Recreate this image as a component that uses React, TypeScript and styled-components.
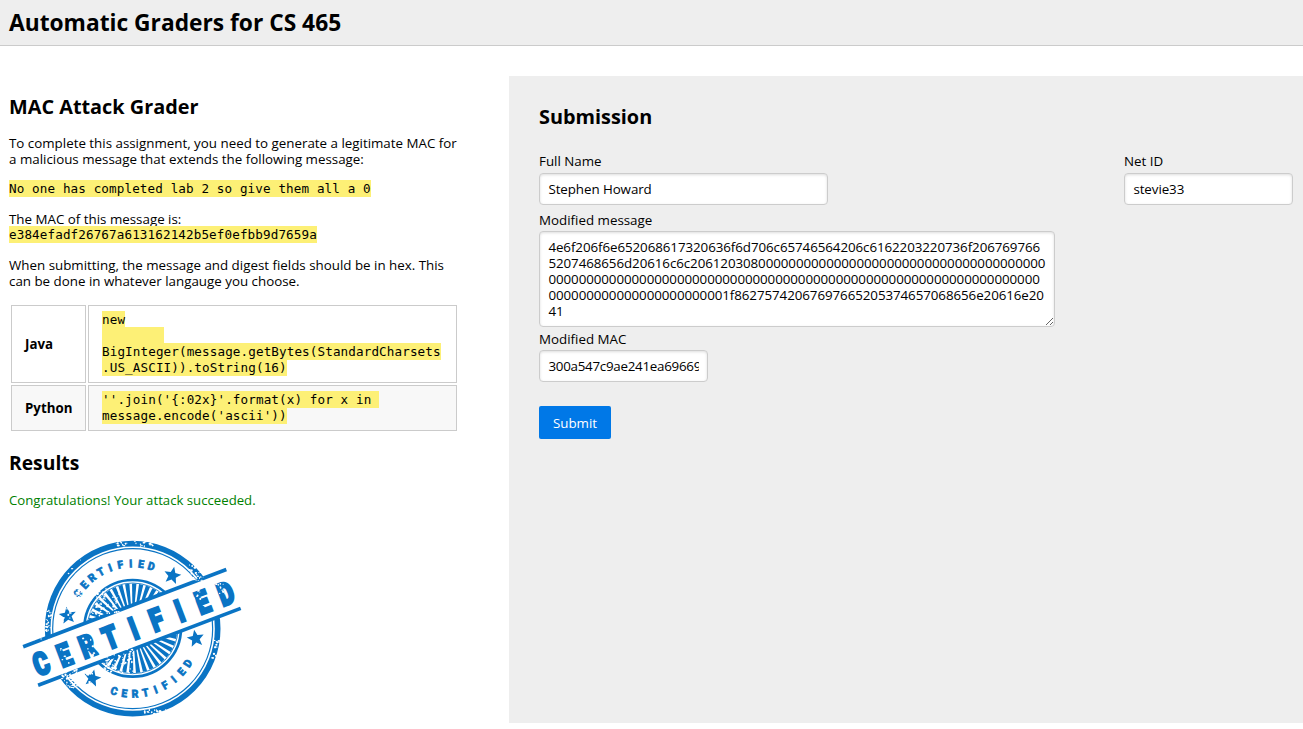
import React from "react";
import styled, { createGlobalStyle } from "styled-components";

const GlobalStyle = createGlobalStyle`
  *, *::before, *::after { box-sizing: border-box; }
  body {
    margin: 0;
    background: #fff;
    color: #000;
    font-family: "Open Sans", "Noto Sans", sans-serif;
    font-size: 13.35px;
    line-height: 16px;
  }
`;

const Header = styled.header`
  height: 46px;
  padding: 0 9px;
  background: #eee;
  border-bottom: 1px solid #cbcbcb;
`;

const PageTitle = styled.h1`
  margin: 0;
  font-size: 22.75px;
  line-height: 45px;
`;

const Columns = styled.main`
  display: grid;
  grid-template-columns: 509px 1fr;
  padding-top: 30px;
`;

const Info = styled.section`
  width: 457px;
  padding: 17px 0 0 9px;
`;

const Heading = styled.h2<{ $gap?: number }>`
  margin: 0 0 ${(p) => p.$gap ?? 14}px;
  font-size: 19.85px;
  line-height: 28px;
`;

const ResultsHeading = styled(Heading)`
  font-size: 19.3px;
`;

const Paragraph = styled.p<{ $gap?: number }>`
  margin: 0 0 ${(p) => p.$gap ?? 13}px;
  white-space: nowrap;
`;

const Success = styled(Paragraph)`
  color: green;
  font-size: 13.2px;
`;

const CodeLine = styled.code`
  display: block;
  position: relative;
  width: fit-content;
  height: 17px;
  margin-bottom: -1px;
  background: #fdf076;
  font-family: "DejaVu Sans Mono", monospace;
  font-size: 12.6px;
  letter-spacing: 0.115px;
  line-height: 17px;
  white-space: pre;
`;

const Digest = styled.div`
  margin: 15px 0 15px;

  ${CodeLine} {
    margin-top: -1px;
  }
`;

const Languages = styled.table`
  width: 450px;
  margin: 0 0 16px;
  border-spacing: 2px;
  table-layout: fixed;
`;

const LanguageRow = styled.tr<{ $height: number; $striped?: boolean }>`
  height: ${(p) => p.$height}px;
  background: ${(p) => (p.$striped ? "#f8f8f8" : "#fff")};
`;

const Cell = styled.td`
  padding: 0 13px 1px;
  border: 1px solid #cbcbcb;
  vertical-align: middle;
`;

const NameCell = styled(Cell)`
  width: 75px;
  font-weight: bold;
  font-size: 13.3px;
`;

const CodeCell = styled(Cell)`
  padding-bottom: 3px;
`;

const Stamp = styled.svg`
  display: block;
  width: 240px;
  height: 195px;
  margin: 22px 0 0 1px;
`;

const Panel = styled.section`
  height: 647px;
  padding: 27px 10px 0 30px;
  background: #eee;
`;

const Form = styled.form`
  display: flex;
  flex-direction: column;
  align-items: flex-start;
`;

const FieldRow = styled.div`
  display: flex;
  justify-content: space-between;
  width: 100%;
`;

const Field = styled.label<{ $gap?: number; $after?: number }>`
  display: flex;
  flex-direction: column;
  gap: ${(p) => p.$gap ?? 4}px;
  margin-bottom: ${(p) => p.$after ?? 7}px;
`;

const Input = styled.input<{ $width: number }>`
  width: ${(p) => p.$width}px;
  height: 32px;
  padding: 0 8.4px;
  border: 1px solid #ccc;
  border-radius: 4px;
  background: #fff;
  box-shadow: inset 0 1px 3px #ddd;
  color: #000;
  font: inherit;
  letter-spacing: -0.07px;
  outline: none;
`;

const MacInput = styled(Input)`
  letter-spacing: -0.26px;
`;

const MessageBox = styled.textarea`
  display: block;
  width: 516px;
  height: 96px;
  padding: 7px 0 7px 8.4px;
  border: 1px solid #ccc;
  border-radius: 4px;
  background: #fff;
  box-shadow: inset 0 1px 3px #ddd;
  color: #000;
  font: inherit;
  letter-spacing: -0.07px;
  white-space: pre;
  overflow: hidden;
  outline: none;
`;

const SubmitButton = styled.button`
  width: 72px;
  height: 33px;
  margin-top: 17px;
  padding: 0;
  border: 0;
  border-radius: 2px;
  background: #0078e7;
  color: #fff;
  font: inherit;
`;

const message = [
  "4e6f206f6e652068617320636f6d706c65746564206c6162203220736f206769766",
  "5207468656d20616c6c206120308" + "0".repeat(38),
  "0".repeat(65),
  "0".repeat(23) + "1f86275742067697665205374657068656e20616e20",
  "41",
].join("\n");

const BLUE = "#0a74c4";
const word = "CERTIFIED".split("");

const starPoints = Array.from({ length: 10 }, (_, i) => {
  const r = i % 2 ? 12 : 27;
  const a = (Math.PI / 5) * i - Math.PI / 2;
  return `${(r * Math.cos(a)).toFixed(1)},${(r * Math.sin(a)).toFixed(1)}`;
}).join(" ");

const stars = [
  [487, 137, 12],
  [173, 257, -8],
  [557, 326, -10],
  [247, 445, 12],
];

// Worn patches of the stamp: centre, spread and number of specks.
const patches = [
  [335, 42, 16, 8, 12], [400, 42, 28, 8, 14], [560, 128, 22, 24, 38],
  [112, 272, 12, 32, 30], [178, 446, 26, 28, 60], [435, 546, 34, 8, 24],
  [560, 205, 18, 28, 12], [630, 175, 16, 20, 12],
  [285, 215, 42, 42, 75], [325, 395, 46, 38, 75], [202, 185, 15, 18, 34],
  [618, 360, 12, 30, 18], [172, 255, 20, 20, 7], [247, 445, 20, 20, 7],
  [110, 330, 45, 10, 12], [165, 380, 22, 28, 6], [240, 345, 25, 30, 6],
  [190, 110, 30, 25, 8],
];

let seed = 11;
const random = () => {
  seed = (seed * 16807) % 2147483647;
  return seed / 2147483647;
};

const specks = patches.flatMap(([x, y, dx, dy, count]) =>
  Array.from({ length: count }, () => ({
    x: x + (random() * 2 - 1) * dx,
    y: y + (random() * 2 - 1) * dy,
    rx: 1.2 + random() * 3,
    ry: 1.2 + random() * 2.4,
  }))
);

function CertifiedStamp() {
  return (
    <Stamp viewBox="0 0 720 585" role="img" aria-label="Certified">
      <g fill="none" stroke={BLUE}>
        <circle cx="368" cy="296" r="255" strokeWidth="17" />
        <circle cx="368" cy="296" r="240" strokeWidth="3.5" />
        <circle cx="368" cy="295" r="145" strokeWidth="8" />
        <circle cx="368" cy="295" r="136" strokeWidth="2.5" />
      </g>
      <g fill={BLUE}>
        {Array.from({ length: 40 }, (_, i) => (
          <polygon key={i} points="-2.5,-50 2.5,-50 6.5,-134 -6.5,-134" transform={`translate(368 295) rotate(${i * 9 + 2})`} />
        ))}
        {stars.map(([x, y, r]) => (
          <polygon key={x} points={starPoints} transform={`translate(${x} ${y}) rotate(${r})`} />
        ))}
      </g>
      <g fill={BLUE} stroke={BLUE} strokeWidth="1.8" fontFamily="Roboto, sans-serif" fontWeight="900" textAnchor="middle" fontSize="33">
        {word.map((letter, i) => (
          <text key={`t${i}`} transform={`translate(368 296) rotate(${-57 + i * 9.2}) translate(0 -184) scale(.95 1)`}>{letter}</text>
        ))}
        {word.map((letter, i) => (
          <text key={`b${i}`} transform={`translate(368 296) rotate(${16.6 - i * 9.3}) translate(0 207) scale(.95 1)`}>{letter}</text>
        ))}
      </g>
      <g transform="translate(366 292) rotate(-20.8)">
        <rect x="-326" y="-62" width="652" height="124" fill="#fff" />
        <rect x="-326" y="-67" width="652" height="11" fill={BLUE} />
        <rect x="-325" y="57" width="650" height="11" fill={BLUE} />
        <g fill={BLUE} stroke={BLUE} strokeWidth="8" fontFamily="Roboto, sans-serif" fontWeight="900" textAnchor="middle" fontSize="94">
          {word.map((letter, i) => (
            <text key={i} transform={`translate(${-293 + i * 74} 38) scale(.74 1)`}>{letter}</text>
          ))}
        </g>
      </g>
      <g fill="#fff">
        {specks.map((s, i) => (
          <ellipse key={i} cx={s.x} cy={s.y} rx={s.rx} ry={s.ry} />
        ))}
      </g>
    </Stamp>
  );
}

export default function App() {
  return (
    <>
      <GlobalStyle />
      <Header>
        <PageTitle>Automatic Graders for CS 465</PageTitle>
      </Header>
      <Columns>
        <Info>
          <Heading>MAC Attack Grader</Heading>
          <Paragraph>
            To complete this assignment, you need to generate a legitimate MAC for
            <br />a malicious message that extends the following message:
          </Paragraph>
          <CodeLine>No one has completed lab 2 so give them all a 0</CodeLine>
          <Digest>
            The MAC of this message is:
            <CodeLine>e384efadf26767a613162142b5ef0efbb9d7659a</CodeLine>
          </Digest>
          <Paragraph $gap={14}>
            When submitting, the message and digest fields should be in hex. This
            <br />
            can be done in whatever langauge you choose.
          </Paragraph>
          <Languages>
            <tbody>
              <LanguageRow $height={78}>
                <NameCell>Java</NameCell>
                <CodeCell>
                  <CodeLine>new</CodeLine>
                  <CodeLine>{"        "}</CodeLine>
                  <CodeLine>BigInteger(message.getBytes(StandardCharsets</CodeLine>
                  <CodeLine>.US_ASCII)).toString(16)</CodeLine>
                </CodeCell>
              </LanguageRow>
              <LanguageRow $height={46} $striped>
                <NameCell>Python</NameCell>
                <CodeCell>
                  <CodeLine>{"''.join('{:02x}'.format(x) for x in "}</CodeLine>
                  <CodeLine>message.encode('ascii'))</CodeLine>
                </CodeCell>
              </LanguageRow>
            </tbody>
          </Languages>
          <ResultsHeading $gap={15}>Results</ResultsHeading>
          <Success>Congratulations! Your attack succeeded.</Success>
          <CertifiedStamp />
        </Info>
        <Panel>
          <Heading $gap={22}>Submission</Heading>
          <Form>
            <FieldRow>
              <Field>
                Full Name
                <Input $width={289} defaultValue="Stephen Howard" />
              </Field>
              <Field>
                Net ID
                <Input $width={169} defaultValue="stevie33" />
              </Field>
            </FieldRow>
            <Field $gap={3} $after={4}>
              Modified message
              <MessageBox spellCheck={false} defaultValue={message} />
            </Field>
            <Field $gap={3}>
              Modified MAC
              <MacInput $width={169} defaultValue="300a547c9ae241ea69669" />
            </Field>
            <SubmitButton type="button">Submit</SubmitButton>
          </Form>
        </Panel>
      </Columns>
    </>
  );
}
